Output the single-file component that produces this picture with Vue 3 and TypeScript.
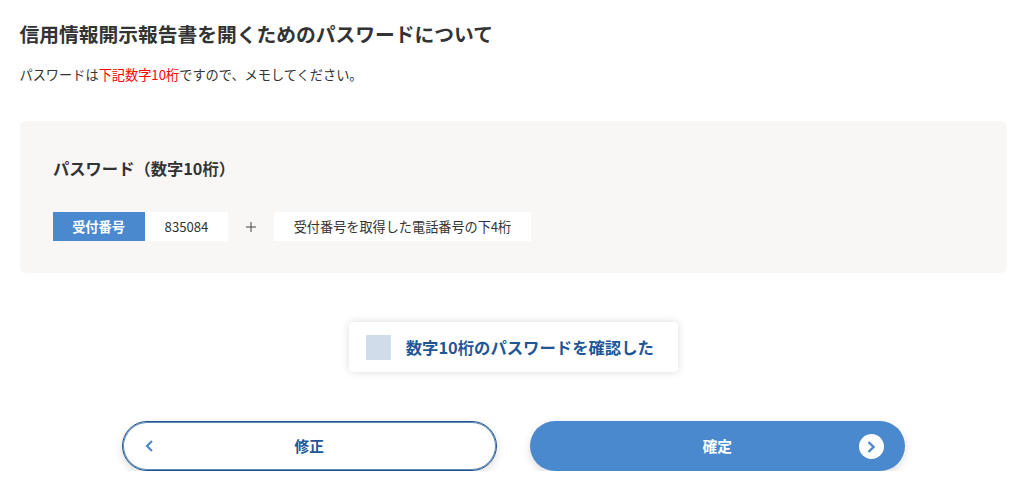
<script setup lang="ts">
const digitsLabel = "数字10桁";
const receptionNumber = "835084";
</script>

<template>
    <main class="page">
        <h1 class="title">信用情報開示報告書を開くためのパスワードについて</h1>
        <p class="lead">パスワードは<span class="red">下記{{ digitsLabel }}</span>ですので、メモしてください。</p>

        <section class="panel">
            <h2 class="panel-title">パスワード（{{ digitsLabel }}）</h2>
            <div class="formula">
                <span class="tag">受付番号</span>
                <span class="cell number">{{ receptionNumber }}</span>
                <svg class="plus" width="46" height="12" viewBox="0 0 46 12">
                    <path d="M18 6 H28 M23 1 V11" fill="none" stroke="#444" stroke-width="1" />
                </svg>
                <span class="cell hint">受付番号を取得した電話番号の下4桁</span>
            </div>
        </section>

        <div class="check-wrap">
            <label class="check">
                <span class="box"></span>
                <span class="check-text">{{ digitsLabel }}のパスワードを確認した</span>
            </label>
        </div>

        <div class="buttons">
            <button class="btn back" type="button">
                <svg class="chev" width="10" height="14" viewBox="0 0 10 14">
                    <path d="M8 2 L3 7 L8 12" fill="none" stroke="#4b89cf" stroke-width="2.2" />
                </svg>
                修正
            </button>
            <button class="btn ok" type="button">
                確定
                <span class="circle">
                    <svg width="12" height="14" viewBox="0 0 12 14">
                        <path d="M3.5 2 L8.5 7 L3.5 12" fill="none" stroke="#4b89cf" stroke-width="2.4" />
                    </svg>
                </span>
            </button>
        </div>
    </main>
</template>

<style>
body {
    background: #fff;
}
</style>

<style scoped>
.page {
    width: 987.5px;
    padding: 0 17px 0 19.5px;
    font-family: "Noto Sans CJK JP", "Noto Sans", sans-serif;
    color: #333;
}

.title {
    margin: 0;
    padding-top: 19px;
    font-size: 19.75px;
    line-height: 29px;
    font-weight: 700;
}

.lead {
    margin: 17px 0 0;
    font-size: 13.2px;
    line-height: 20px;
}

.red {
    color: #f00;
}

.panel {
    margin-top: 36px;
    height: 152px;
    box-sizing: border-box;
    padding: 35px 33.5px 0;
    background: #f9f7f6;
    border-radius: 6px;
}

.panel-title {
    margin: 0;
    font-size: 16.3px;
    line-height: 25px;
    font-weight: 700;
}

.formula {
    display: flex;
    align-items: center;
    margin-top: 31px;
    height: 29px;
}

.tag {
    width: 91px;
    padding-right: 1px;
    height: 29px;
    line-height: 29px;
    text-align: center;
    background: #4b89cf;
    color: #fff;
    font-size: 13.2px;
    font-weight: 700;
}

.cell {
    height: 29px;
    line-height: 29px;
    background: #fff;
    font-size: 13.15px;
    text-align: center;
}

.number {
    width: 83px;
}

.plus {
    flex: none;
}

.hint {
    width: 257px;
}

.check-wrap {
    display: flex;
    justify-content: center;
    margin-top: 49px;
}

.check {
    display: flex;
    align-items: center;
    width: 329px;
    height: 50px;
    box-sizing: border-box;
    padding-left: 17px;
    background: #fff;
    border-radius: 4px;
    box-shadow: 0 0 8px rgba(0, 0, 0, 0.14);
}

.box {
    width: 25px;
    height: 25px;
    background: #d0dcea;
    border-radius: 1px;
}

.check-text {
    margin-left: 15px;
    color: #1f5796;
    font-size: 16.35px;
    font-weight: 700;
}

.buttons {
    display: flex;
    justify-content: center;
    gap: 33px;
    margin-top: 49px;
}

.btn {
    position: relative;
    width: 375px;
    height: 50px;
    box-sizing: border-box;
    border-radius: 25px;
    font-family: inherit;
    font-size: 14.7px;
    font-weight: 700;
    box-shadow: 0 3px 8px rgba(0, 0, 0, 0.14);
    padding: 0 0 2px;
}

.back {
    background: #fff;
    border: 1px solid #1f5796;
    color: #1f5796;
    box-shadow: inset 0 0 0 1px rgba(31, 87, 150, 0.7), 0 3px 8px rgba(0, 0, 0, 0.14);
}

.ok {
    background: #4b89cf;
    border: none;
    color: #fff;
}

.chev {
    position: absolute;
    left: 21px;
    top: 17px;
}

.circle {
    position: absolute;
    right: 21px;
    top: 13px;
    width: 25px;
    height: 25px;
    border-radius: 50%;
    background: #fff;
    display: flex;
    align-items: center;
    justify-content: center;
}
</style>
